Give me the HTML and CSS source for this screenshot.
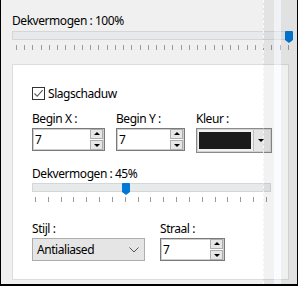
FILE: index.html
```html
<!DOCTYPE html>
<html lang="nl">
<head>
    <meta charset="UTF-8">
    <title>Slagschaduw</title>
    <link rel="stylesheet" href="styles.css">
</head>
<body>
    <div class="window">
        <div class="label top-label">Dekvermogen : 100%</div>
        <div class="slider wide">
            <div class="track"></div>
            <div class="thumb" style="left: 273px"></div>
            <div class="ticks">
                <span></span><span></span><span></span><span></span><span></span><span></span><span></span><span></span><span></span><span></span><span></span><span></span><span></span><span></span><span></span><span></span><span></span>
                <span></span><span></span><span></span><span></span><span></span><span></span><span></span><span></span><span></span><span></span><span></span><span></span><span></span><span></span><span></span><span></span><span></span>
            </div>
        </div>

        <div class="group">
            <label class="check-row">
                <span class="checkbox">
                    <svg width="11" height="11" viewBox="0 0 11 11"><path d="M1.5 5.5 L4.2 8.3 L9.6 2.2" fill="none" stroke="#555" stroke-width="1.1"/></svg>
                </span>
                Slagschaduw
            </label>

            <div class="field-row">
                <div class="field">
                    <div class="label">Begin X :</div>
                    <div class="spin w-x">
                        <span class="value">7</span>
                        <span class="spin-btns"><span class="btn up"></span><span class="btn down"></span></span>
                    </div>
                </div>
                <div class="field">
                    <div class="label">Begin Y :</div>
                    <div class="spin w-y">
                        <span class="value">7</span>
                        <span class="spin-btns"><span class="btn up"></span><span class="btn down"></span></span>
                    </div>
                </div>
                <div class="field">
                    <div class="label">Kleur :</div>
                    <div class="color-pick">
                        <span class="swatch"></span>
                        <span class="drop"></span>
                    </div>
                </div>
            </div>

            <div class="label mid-label">Dekvermogen : 45%</div>
            <div class="slider narrow">
                <div class="track"></div>
                <div class="thumb" style="left: 90px"></div>
                <div class="ticks">
                    <span></span><span></span><span></span><span></span><span></span><span></span><span></span><span></span><span></span><span></span>
                    <span></span><span></span><span></span><span></span><span></span><span></span><span></span><span></span><span></span>
                </div>
            </div>

            <div class="field-row bottom-row">
                <div class="field">
                    <div class="label">Stijl :</div>
                    <div class="select">
                        <span>Antialiased</span>
                        <svg width="10" height="6" viewBox="0 0 10 6"><path d="M0.5 0.5 L5 5 L9.5 0.5" fill="none" stroke="#555" stroke-width="1"/></svg>
                    </div>
                </div>
                <div class="field straal">
                    <div class="label">Straal :</div>
                    <div class="spin w-s">
                        <span class="value">7</span>
                        <span class="spin-btns"><span class="btn up"></span><span class="btn down"></span></span>
                    </div>
                </div>
            </div>
        </div>

        <div class="glass">
            <div class="band b1"></div>
            <div class="band b2"></div>
            <div class="band b3"></div>
        </div>
    </div>
</body>
</html>
```

FILE: styles.css
```css
body {
    margin: 0;
    font-family: "Noto Sans", "Open Sans", sans-serif;
    font-size: 12px;
    letter-spacing: -0.45px;
    color: #000;
    background: #000;
}
.window {
    position: relative;
    width: 296px;
    height: 284px;
    margin-left: 1px;
    background: #f0f0f0;
    overflow: hidden;
}
.label {
    line-height: 16px;
    height: 16px;
    white-space: nowrap;
}
.top-label {
    padding: 13px 0 0 11px;
}
.slider {
    position: relative;
}
.slider.wide {
    margin: 2px 0 0 11px;
    width: 278px;
    height: 30px;
}
.slider.narrow {
    margin-top: 1px;
    width: 239px;
    height: 30px;
}
.track {
    height: 7px;
    margin-top: 1px;
    background: #e7eaea;
    border: 1px solid #d6d6d6;
}
.thumb {
    position: absolute;
    top: 0;
    width: 8px;
    height: 9px;
    background: #0078d7;
    border-radius: 1px 1px 0 0;
}
.thumb::after {
    content: "";
    position: absolute;
    left: 0;
    top: 9px;
    border-left: 4px solid transparent;
    border-right: 4px solid transparent;
    border-top: 3px solid #0078d7;
}
.ticks {
    display: flex;
    justify-content: space-between;
    margin: 5px 1px 0 4px;
}
.narrow .ticks {
    margin: 5px 4px 0 3px;
}
.ticks span {
    width: 1px;
    height: 5px;
    background: #9a9a9a;
}
.group {
    margin: 3px 0 0 11px;
    width: 256px;
    height: 194px;
    padding: 20px 0 0 19px;
    background: #fff;
    border: 1px solid #dcdcdc;
}
.check-row {
    display: flex;
    align-items: center;
    gap: 3px;
    height: 15px;
    margin-top: 1px;
}
.checkbox {
    display: flex;
    align-items: center;
    justify-content: center;
    width: 11px;
    height: 11px;
    border: 1px solid #333;
}
.field-row {
    display: flex;
    gap: 11px;
    margin-top: 10px;
}
.field .label {
    margin-bottom: 1px;
}
.spin {
    display: flex;
    align-items: center;
    justify-content: space-between;
    height: 21px;
    padding: 0 1px 0 2px;
    border: 1px solid #7a7a7a;
    box-shadow: inset 0 0 0 1px #cfcfcf;
    background: #fff;
}
.w-x { width: 68px; }
.w-y { width: 64px; }
.w-s { width: 60px; }
.spin-btns {
    display: flex;
    flex-direction: column;
    gap: 1px;
}
.btn {
    position: relative;
    width: 11px;
    height: 8px;
    background: #e6e6e6;
    border: 1px solid #adadad;
}
.btn::after {
    content: "";
    position: absolute;
    left: 3px;
    border-left: 3px solid transparent;
    border-right: 3px solid transparent;
}
.btn.up::after {
    top: 2px;
    border-bottom: 3px solid #000;
}
.btn.down::after {
    top: 3px;
    border-top: 3px solid #000;
}
.color-pick {
    display: flex;
    align-items: center;
    gap: 2px;
    width: 71px;
    height: 21px;
    padding: 1px 1px 1px 2px;
    border: 1px solid #8a8a8a;
    box-shadow: inset 0 0 0 1px #d2d2d2;
    background: #f0f0f0;
}
.swatch {
    width: 52px;
    height: 17px;
    background: #1a1a1a;
}
.drop {
    position: relative;
    flex: 1;
    height: 21px;
    background: #e6e6e6;
    border-left: 1px solid #bdbdbd;
}
.drop::after {
    content: "";
    position: absolute;
    left: 4px;
    top: 9px;
    border-left: 3px solid transparent;
    border-right: 3px solid transparent;
    border-top: 3px solid #000;
}
.mid-label {
    margin-top: 13px;
}
.bottom-row {
    gap: 15px;
    margin-top: 8px;
}
.select {
    display: flex;
    align-items: center;
    justify-content: space-between;
    width: 102px;
    height: 21px;
    padding: 0 5px 0 4px;
    background: #e5e5e5;
    border: 1px solid #adadad;
}
.glass {
    position: absolute;
    top: 0;
    left: 262px;
    width: 34px;
    height: 284px;
    display: flex;
    pointer-events: none;
}
.band {
    height: 100%;
}
.b1 {
    width: 10px;
    background: rgba(0, 0, 0, 0.05);
    border-left: 1px dashed rgba(255, 255, 255, 0.8);
}
.b2 {
    width: 7px;
    background: rgba(240, 246, 255, 0.35);
}
.b3 {
    flex: 1;
    background: rgba(0, 0, 0, 0.06);
}
```
